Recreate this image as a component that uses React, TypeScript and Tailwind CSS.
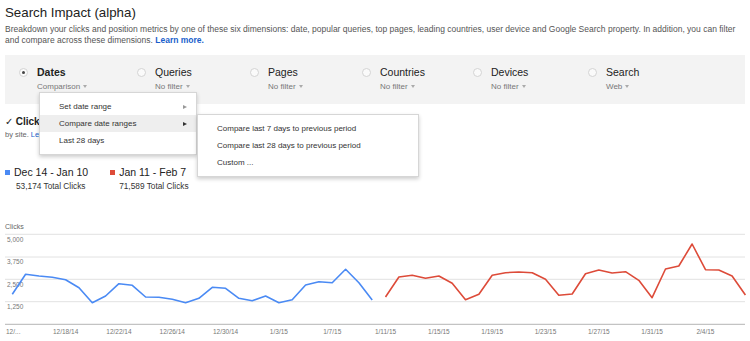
import React from 'react'

const blue = [293.3, 273.3, 275, 276.3, 278.7, 286.7, 301.7, 295, 282.7, 284.3, 296, 296.3, 298.3, 301.7, 297.3, 286.3, 287.3, 297.3, 299.7, 295, 301.7, 298.7, 284, 280.7, 281.7, 268.3, 281.7, 299]
const red = [296, 276, 274.3, 277.3, 275, 282.3, 298.7, 293.3, 274.3, 271.7, 271, 271.7, 278.3, 294.3, 293, 272.7, 269, 272, 270.7, 279.3, 296.7, 268, 265, 243, 268.7, 269, 275, 294]

const TOP = 230
const px = (i: number) => 12.3 + 13.33 * i

function points(ys: number[], offset: number) {
  return ys.map((y, i) => `${px(i + offset).toFixed(1)},${(y - TOP).toFixed(1)}`).join(' ')
}

const xLabels = ['12/18/14', '12/22/14', '12/26/14', '12/30/14', '1/3/15', '1/7/15', '1/11/15', '1/15/15', '1/19/15', '1/23/15', '1/27/15', '1/31/15', '2/4/15']
const grid = [233.3, 256, 278.3, 300.7]
const yLabels = ['5,000', '3,750', '2,500', '1,250']

const dims = [
  { label: 'Dates', sub: 'Comparison', w: 'w-[118px]', checked: true },
  { label: 'Queries', sub: 'No filter', w: 'w-[113px]' },
  { label: 'Pages', sub: 'No filter', w: 'w-[112px]' },
  { label: 'Countries', sub: 'No filter', w: 'w-[111px]' },
  { label: 'Devices', sub: 'No filter', w: 'w-[115px]' },
  { label: 'Search', sub: 'Web', w: 'w-[115px]' },
]

function Caret() {
  return <span className="ml-[3px] inline-block align-middle border-x-[2px] border-t-[3px] border-x-transparent border-t-[#aaa]" />
}

function Arrow({ dark }: { dark?: boolean }) {
  return (
    <span
      className={`inline-block border-y-[2.5px] border-l-[4px] border-y-transparent ${dark ? 'border-l-[#333]' : 'border-l-[#999]'}`}
    />
  )
}

function DateMenu() {
  return (
    <div className="absolute left-[34px] top-[37px] z-10 w-[158px] bg-white py-[5px] border border-[#d6d6d6] shadow-[0_2px_4px_rgba(0,0,0,0.2)] text-[8px] text-[#333]">
      <div className="flex h-[17px] items-center justify-between pl-[19px] pr-[9px]">
        <span>Set date range</span>
        <Arrow />
      </div>
      <div className="relative flex h-[17px] items-center justify-between bg-[#eeeeee] pl-[19px] pr-[9px]">
        <span>Compare date ranges</span>
        <Arrow dark />
        <div className="absolute left-[157px] top-[-1px] w-[222px] bg-white py-[5px] border border-[#d6d6d6] shadow-[0_2px_4px_rgba(0,0,0,0.2)]">
          <div className="flex h-[17px] items-center pl-[19px]">Compare last 7 days to previous period</div>
          <div className="flex h-[17px] items-center pl-[19px]">Compare last 28 days to previous period</div>
          <div className="flex h-[17px] items-center pl-[19px]">Custom ...</div>
        </div>
      </div>
      <div className="flex h-[17px] items-center pl-[19px]">Last 28 days</div>
    </div>
  )
}

export default function App() {
  return (
    <div className="w-[750px] h-[341px] overflow-hidden bg-white font-['Liberation_Sans',Arial,sans-serif] text-[#222]">
      <div className="pl-[5px] pt-[5px]">
        <h1 className="text-[13.3px] leading-[16px]">Search Impact (alpha)</h1>
        <p className="mt-[2.5px] text-[8.5px] leading-[11px] text-[#555]">
          Breakdown your clicks and position metrics by one of these six dimensions: date, popular queries, top pages, leading countries, user device and Google Search property. In addition, you can filter
          <br />
          and compare across these dimensions. <span className="font-bold text-[#1a5fcc]">Learn more.</span>
        </p>
      </div>

      <div className="relative mx-[5px] mt-[9.5px] flex h-[49px] bg-[#f3f3f3] pl-[13.5px] pt-[11px]">
        {dims.map((d) => (
          <div key={d.label} className={`flex ${d.w}`}>
            <span className="mt-[2px] flex h-[9px] w-[9px] shrink-0 items-center justify-center rounded-full border border-[#d4d4d4] bg-[#fafafa]">
              {d.checked && <span className="h-[3px] w-[3px] rounded-full bg-[#444]" />}
            </span>
            <div className="ml-[9.5px] flex flex-col">
              <span className={`text-[10.5px] leading-[13px] text-[#222] ${d.checked ? 'font-bold' : ''}`}>{d.label}</span>
              <span className="mt-[3px] text-[8px] leading-[10px] text-[#777]">
                {d.sub}
                <Caret />
              </span>
            </div>
          </div>
        ))}
        <DateMenu />
      </div>

      <div className="pl-[5px]">
        <div className="mt-[12px] text-[10px] leading-[12px] font-bold text-[#222]">
          <span className="font-normal">✓</span> Clicks
        </div>
        <div className="mt-[2px] w-[34px] overflow-hidden whitespace-nowrap text-[7.5px] leading-[10px] text-[#666]">
          by site. <span className="text-[#1a5fcc]">Learn more</span>
        </div>

        <div className="mt-[26px] flex gap-[22px]">
          <div>
            <div className="flex items-center gap-[4px] text-[10.5px] leading-[13px] text-[#222]">
              <span className="h-[5px] w-[5px] bg-[#4a8af4]" />
              Dec 14 - Jan 10
            </div>
            <div className="mt-[2px] pl-[11px] text-[8.3px] leading-[11px] text-[#333]">53,174 Total Clicks</div>
          </div>
          <div>
            <div className="flex items-center gap-[4px] text-[10.5px] leading-[13px] text-[#222]">
              <span className="h-[5px] w-[5px] bg-[#dd4b39]" />
              Jan 11 - Feb 7
            </div>
            <div className="mt-[2px] pl-[9px] text-[8.3px] leading-[11px] text-[#333]">71,589 Total Clicks</div>
          </div>
        </div>

        <div className="mt-[31px] text-[7px] leading-[8px] text-[#666]">Clicks</div>
      </div>

      <svg width="750" height="111" className="block" style={{ fontFamily: "'Liberation Sans', Arial, sans-serif" }}>
        {grid.map((g) => (
          <line key={g} x1="5" x2="745" y1={g - TOP} y2={g - TOP} stroke="#e2e2e2" strokeWidth="1" />
        ))}
        <line x1="5" x2="745" y1={323.3 - TOP} y2={323.3 - TOP} stroke="#b5b5b5" strokeWidth="1" />
        {yLabels.map((t, i) => (
          <text key={t} x="7" y={grid[i] - TOP + 7.3} fontSize="6.5" fill="#777">
            {t}
          </text>
        ))}
        <polyline points={points(blue, 0)} fill="none" stroke="#4a8af4" strokeWidth="1.6" strokeLinejoin="round" />
        <polyline points={points(red, 28)} fill="none" stroke="#dd4b39" strokeWidth="1.6" strokeLinejoin="round" />
        <text x="6" y={333 - TOP} fontSize="6.5" fill="#777">12/...</text>
        {xLabels.map((t, i) => (
          <text key={t} x={px(4 + i * 4)} y={333 - TOP} fontSize="6.5" fill="#777" textAnchor="middle">
            {t}
          </text>
        ))}
      </svg>
    </div>
  )
}
